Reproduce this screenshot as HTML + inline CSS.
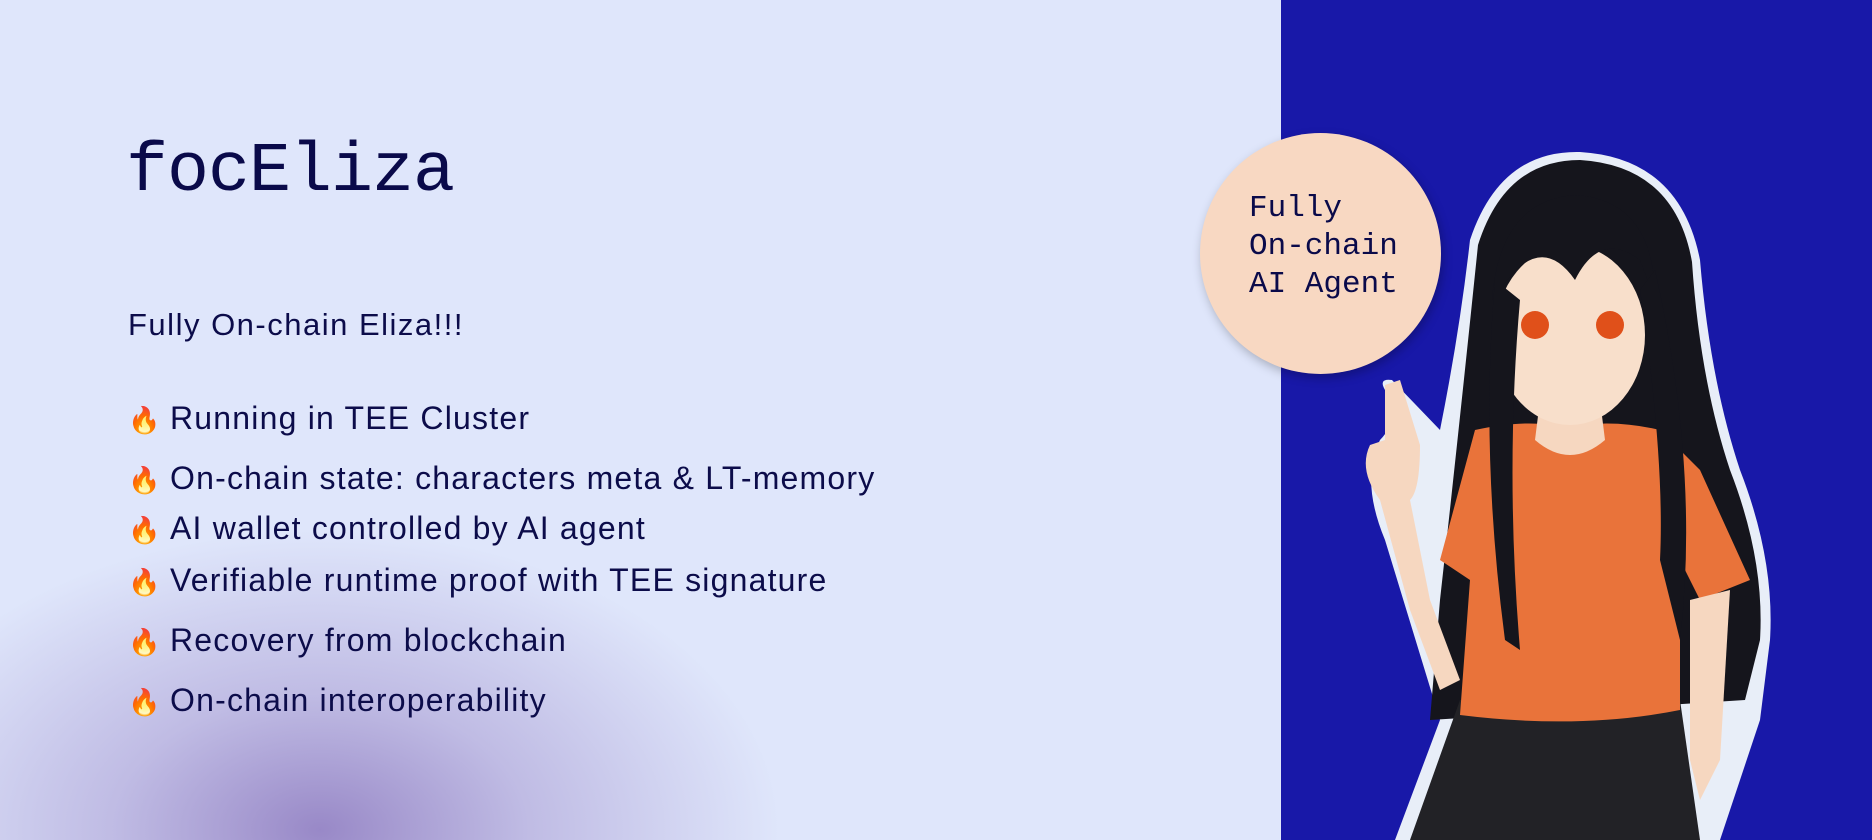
<!DOCTYPE html>
<html><head><meta charset="utf-8"><style>
html,body{margin:0;padding:0;overflow:hidden;width:1872px;height:840px}
#w{position:relative;width:1872px;height:840px;overflow:hidden;background:#dfe6fb;font-family:"Liberation Sans",sans-serif;color:#0c0c4a}
.blob{position:absolute;left:-180px;top:500px;width:1000px;height:340px;background:radial-gradient(ellipse 460px 300px at 500px 330px,rgba(140,120,190,.85) 0%,rgba(160,145,205,.5) 45%,rgba(223,230,251,0) 100%)}
.title{position:absolute;left:126px;top:128px;font-family:"Liberation Mono",monospace;font-size:70px;line-height:90px;color:#0a0a4a;letter-spacing:-1px}
.sub{position:absolute;left:128px;top:305px;font-size:31px;line-height:40px;letter-spacing:1.5px}
.li{position:absolute;left:128px;font-size:32px;line-height:40px;white-space:nowrap;letter-spacing:1.2px}
.li span{display:inline-block;width:42px;font-size:26px;letter-spacing:0}
.panel{position:absolute;left:1281px;top:0;width:591px;height:840px;background:#1818a8}
.bubble{position:absolute;left:1200px;top:133px;width:241px;height:241px;border-radius:50%;background:#f8d8c2;box-shadow:2px 4px 10px rgba(0,0,0,.25)}
.bt{position:absolute;left:1249px;top:190px;font-family:"Liberation Mono",monospace;font-size:31px;line-height:38px;color:#0a0a4a}
svg{position:absolute;left:0;top:0}
</style></head><body><div id="w">
<div class="blob"></div>
<div class="title">focEliza</div>
<div class="sub">Fully On-chain Eliza!!!</div>
<div class="li" style="top:398px"><span>🔥</span>Running in TEE Cluster</div>
<div class="li" style="top:458px"><span>🔥</span>On-chain state: characters meta &amp; LT-memory</div>
<div class="li" style="top:508px"><span>🔥</span>AI wallet controlled by AI agent</div>
<div class="li" style="top:560px"><span>🔥</span>Verifiable runtime proof with TEE signature</div>
<div class="li" style="top:620px"><span>🔥</span>Recovery from blockchain</div>
<div class="li" style="top:680px"><span>🔥</span>On-chain interoperability</div>
<div class="panel"></div>
<svg width="1872" height="840">
<path d="M1470 240 Q1500 150 1580 152 Q1680 158 1700 260 Q1710 380 1740 470 Q1775 560 1770 640 L1760 720 L1720 840 L1395 840 L1440 720 L1385 540 Q1360 480 1380 440 Q1400 420 1385 390 Q1378 378 1392 380 L1440 430 Q1460 330 1470 240Z" fill="#e8eef8"/>
<path d="M1478 245 Q1505 160 1580 160 Q1675 166 1692 262 Q1700 380 1730 470 Q1765 560 1760 640 L1745 700 L1430 720 L1440 600 Q1460 420 1478 245Z" fill="#15151c"/>
<path d="M1460 700 L1680 700 L1700 840 L1410 840Z" fill="#222226"/>
<path d="M1475 430 Q1530 418 1565 428 Q1610 418 1660 430 L1700 470 L1750 580 L1700 600 L1680 560 L1680 710 Q1580 730 1460 715 L1470 580 L1440 560 Z" fill="#e9733a"/>
<path d="M1540 400 L1600 400 L1605 440 Q1570 470 1535 440Z" fill="#f6d7c0"/>
<ellipse cx="1570" cy="335" rx="75" ry="90" fill="#f8dfcb"/>
<path d="M1492 300 Q1500 200 1575 195 Q1655 200 1655 300 L1640 260 Q1600 230 1575 280 Q1540 230 1500 290Z" fill="#15151c"/>
<circle cx="1535" cy="325" r="14" fill="#e0501a"/><circle cx="1610" cy="325" r="14" fill="#e0501a"/>
<path d="M1385 385 L1400 380 L1420 445 Q1420 490 1410 500 L1430 600 L1460 680 L1440 690 L1410 610 L1380 500 Q1358 470 1370 445 L1385 440Z" fill="#f6d7c0"/>
<path d="M1690 600 L1730 590 L1720 760 L1700 800 L1690 760Z" fill="#f6d7c0"/>
<path d="M1495 280 Q1480 450 1505 640 L1520 650 Q1505 470 1520 300Z" fill="#15151c"/>
<path d="M1640 290 Q1665 460 1660 560 L1680 640 Q1700 470 1655 270Z" fill="#15151c"/>
</svg>
<div class="bubble"></div>
<div class="bt">Fully<br>On-chain<br>AI Agent</div>
</div></body></html>
